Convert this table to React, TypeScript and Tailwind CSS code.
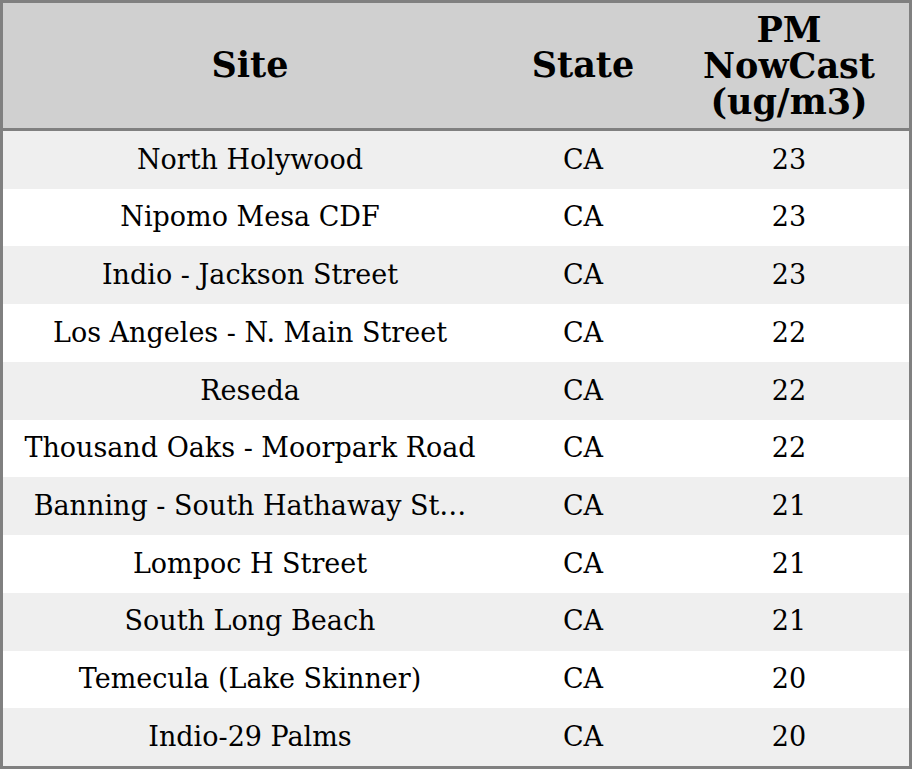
import React from "react";

const rows: [string, string, string][] = [
  ["North Holywood", "CA", "23"],
  ["Nipomo Mesa CDF", "CA", "23"],
  ["Indio - Jackson Street", "CA", "23"],
  ["Los Angeles - N. Main Street", "CA", "22"],
  ["Reseda", "CA", "22"],
  ["Thousand Oaks - Moorpark Road", "CA", "22"],
  ["Banning - South Hathaway St…", "CA", "21"],
  ["Lompoc H Street", "CA", "21"],
  ["South Long Beach", "CA", "21"],
  ["Temecula (Lake Skinner)", "CA", "20"],
  ["Indio-29 Palms", "CA", "20"],
];

const App = () => {
  return (
    <div
      className="w-[912px] h-[769px] border-[3px] border-[#808080] flex flex-col text-black"
      style={{ fontFamily: '"DejaVu Serif", serif' }}
    >
      <div className="flex h-[128px] shrink-0 bg-[#d0d0d0] border-b-[3px] border-[#808080] font-bold text-[35px]">
        <div className="w-[494px] flex items-center justify-center">Site</div>
        <div className="w-[172px] flex items-center justify-center">State</div>
        <div className="flex-1 flex items-center justify-center text-center leading-[36px]">
          PM
          <br />
          NowCast
          <br />
          (ug/m3)
        </div>
      </div>
      <div className="flex-1 flex flex-col">
        {rows.map(([site, state, val], i) => (
          <div
            key={i}
            className={`flex-1 flex items-center text-[27px] ${i % 2 === 0 ? "bg-[#efefef]" : "bg-white"}`}
          >
            <div className="w-[494px] px-[20px] truncate text-center">{site}</div>
            <div className="w-[172px] text-center">{state}</div>
            <div className="flex-1 text-center">{val}</div>
          </div>
        ))}
      </div>
    </div>
  );
};

export default App;
